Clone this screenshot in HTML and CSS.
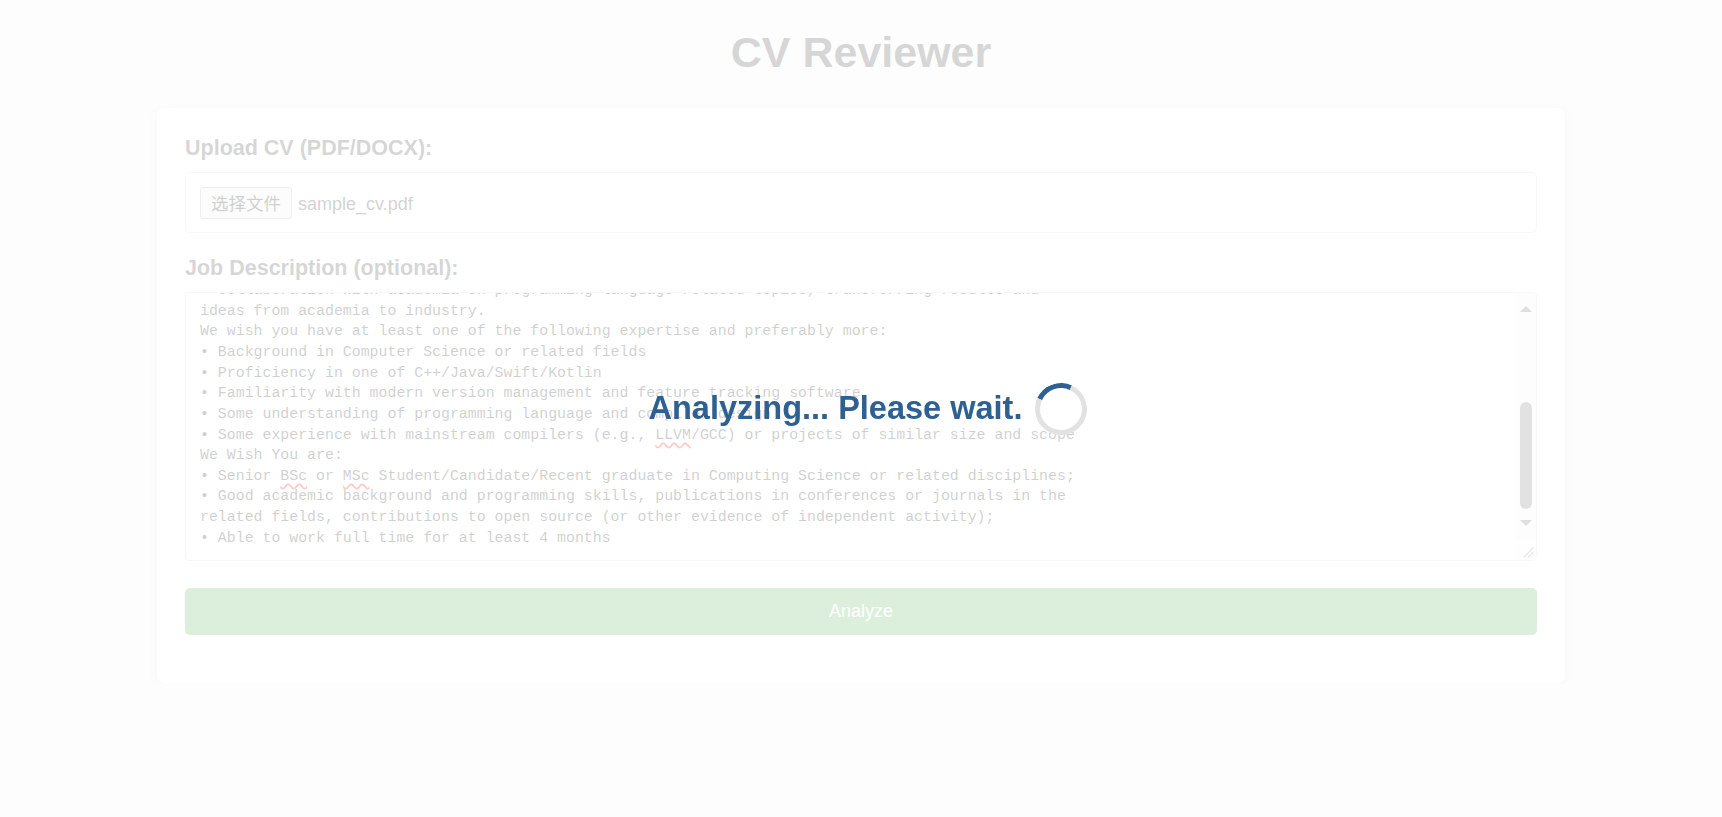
FILE: index.html
```html
<!DOCTYPE html>
<html lang="en">
<head>
<meta charset="utf-8">
<title>CV Reviewer</title>
<link rel="stylesheet" href="styles.css">
</head>
<body>
<h1 class="title">CV Reviewer</h1>
<main class="card">
  <form class="form">
    <label class="label">Upload CV (PDF/DOCX):</label>
    <div class="file-input"><span class="file-btn">选择文件</span><span class="file-name">sample_cv.pdf</span></div>
    <label class="label">Job Description (optional):</label>
    <div class="jd">
      <div class="jd-text" id="jd-text">Compiler Engineer Intern (Programming Languages Lab)
Our team works on cutting-edge compiler and programming language technologies that power
millions of devices. As an intern, you will be part of the team and may take part in:
• Design and implementation of new programming language features and tooling
• Development of compiler front-end, optimizations and code generation
• Research on static analysis, type systems and program verification
• Performance analysis and tuning of real-world applications
• Contributions to open source compiler infrastructure projects
• Prototyping and evaluation of new ideas with the research team
• Collaboration with academia on programming language related topics, transferring results and
ideas from academia to industry.
We wish you have at least one of the following expertise and preferably more:
• Background in Computer Science or related fields
• Proficiency in one of C++/Java/Swift/Kotlin
• Familiarity with modern version management and feature tracking software
• Some understanding of programming language and compiler design
• Some experience with mainstream compilers (e.g., <span class="typo">LLVM</span>/GCC) or projects of similar size and scope
We Wish You are:
• Senior <span class="typo">BSc</span> or <span class="typo">MSc</span> Student/Candidate/Recent graduate in Computing Science or related disciplines;
• Good academic background and programming skills, publications in conferences or journals in the
related fields, contributions to open source (or other evidence of independent activity);
• Able to work full time for at least 4 months</div>
      <div class="sb">
        <span class="sb-btn sb-up"><span class="arrow-up"></span></span>
        <span class="sb-track"><span class="sb-thumb" style="margin-top:77px;height:107px"></span></span>
        <span class="sb-btn sb-down"><span class="arrow-down"></span></span>
        <span class="sb-corner"><svg width="20" height="20" viewBox="0 0 20 20"><path d="M17 8 L8 17 M17 12.5 L12.5 17" stroke="#888" stroke-width="1.2" fill="none" stroke-linecap="round"/></svg></span>
      </div>
    </div>
    <button class="analyze" type="button">Analyze</button>
  </form>
</main>
<div class="overlay">
  <span class="overlay-text">Analyzing... Please wait.</span>
  <span class="spinner"></span>
</div>
<script src="script.js"></script>
</body>
</html>
```

FILE: styles.css
```css
* { box-sizing: border-box; }

body {
  margin: 0;
  background: #f4f4f4;
  font-family: "Liberation Sans", Arial, sans-serif;
  color: #333;
}

.title {
  margin: 28px 0 32px;
  font-size: 43px;
  line-height: 48px;
  font-weight: bold;
  text-align: center;
  color: #333;
}

.card {
  display: block;
  width: 1408px;
  margin: 0 auto;
  padding: 28px 28px 48px;
  background: #fff;
  border-radius: 8px;
  box-shadow: 0 2px 12px rgba(0, 0, 0, 0.12);
}

.form {
  display: flex;
  flex-direction: column;
}

.label {
  display: block;
  font-size: 21.5px;
  line-height: 25px;
  font-weight: bold;
  color: #333;
  margin-bottom: 11px;
}

.file-input {
  display: flex;
  align-items: center;
  height: 61px;
  padding: 0 14px;
  border: 1px solid #ddd;
  border-radius: 5px;
  margin-bottom: 23px;
}

.file-btn {
  display: inline-flex;
  align-items: center;
  height: 32px;
  padding: 0 10px;
  border: 1px solid #aaa;
  border-radius: 3px;
  background: #efefef;
  font-family: "Noto Sans CJK SC", sans-serif;
  font-size: 17.5px;
  color: #111;
}

.file-name {
  margin-left: 6px;
  margin-top: 4px;
  font-size: 18px;
  color: #222;
}

.jd {
  display: flex;
  height: 269px;
  border: 1px solid #ddd;
  border-radius: 4px;
  background: #fff;
  overflow: hidden;
  margin-bottom: 27px;
}

.jd-text {
  flex: 1;
  overflow: hidden;
  padding: 14px 14px 12px 14px;
  white-space: pre-wrap;
  font-family: "Liberation Mono", "Courier New", monospace;
  font-size: 14.88px;
  line-height: 20.66px;
  color: #111;
}

.typo {
  text-decoration: underline wavy #f00;
  text-decoration-thickness: 1.5px;
  text-underline-offset: 3px;
}

.sb {
  width: 20px;
  display: flex;
  flex-direction: column;
  background: #f3f3f3;
}

.sb-btn {
  display: flex;
  align-items: center;
  justify-content: center;
}

.sb-up {
  height: 32px;
}

.sb-down {
  height: 20px;
  margin-bottom: 7px;
}

.arrow-up {
  width: 0;
  height: 0;
  border-left: 6px solid transparent;
  border-right: 6px solid transparent;
  border-bottom: 6px solid #5e5e5e;
}

.arrow-down {
  width: 0;
  height: 0;
  border-left: 6px solid transparent;
  border-right: 6px solid transparent;
  border-top: 6px solid #5e5e5e;
}

.sb-track {
  flex: 1;
  display: flex;
  flex-direction: column;
  align-items: center;
}

.sb-thumb {
  display: block;
  width: 12px;
  border-radius: 6px;
  background: #6e6e6e;
}

.sb-corner {
  display: block;
  height: 20px;
  background: #f7f7f7;
}

.sb-corner svg {
  display: block;
}

.analyze {
  height: 47px;
  width: 100%;
  border: none;
  border-radius: 5px;
  background: #4caf50;
  color: #fff;
  font-family: "Liberation Sans", Arial, sans-serif;
  font-size: 18px;
}

.overlay {
  position: fixed;
  inset: 0;
  padding-left: 14px;
  background: rgba(255, 255, 255, 0.8);
  display: flex;
  align-items: center;
  justify-content: center;
  gap: 13px;
}

.overlay-text {
  font-size: 32.5px;
  font-weight: bold;
  color: #2e6092;
}

.spinner {
  width: 52px;
  height: 52px;
  border: 5px solid #e2e2e2;
  border-top-color: #2e6092;
  border-radius: 50%;
  transform: rotate(-20deg);
}
```

FILE: script.js
```js
var jdText = document.getElementById('jd-text');
jdText.scrollTop = jdText.scrollHeight;
```
